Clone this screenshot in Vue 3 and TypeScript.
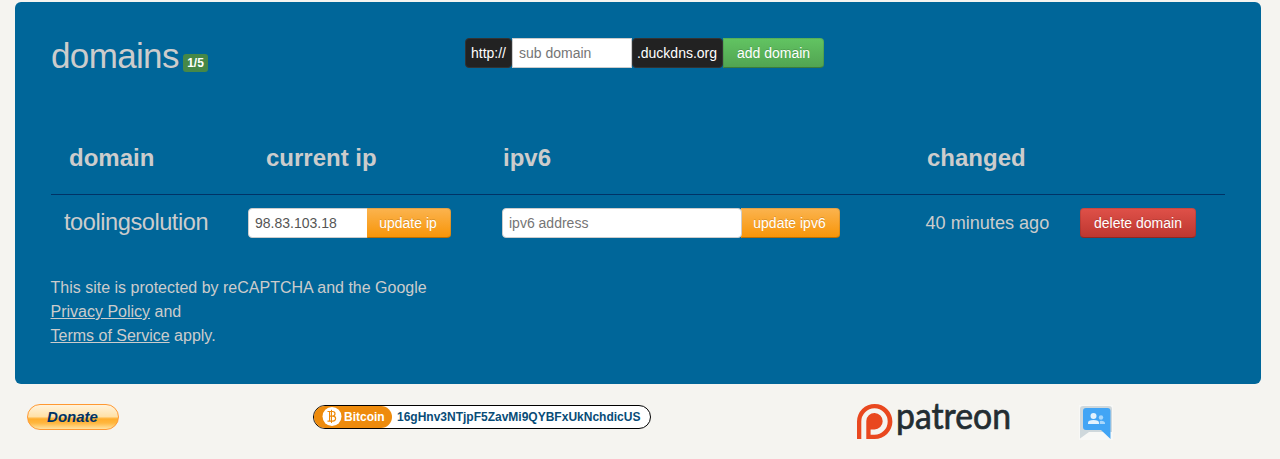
<script setup lang="ts">
import { ref } from 'vue'

interface Domain {
  name: string
  ip: string
  ipv6: string
  changed: string
}

const maxDomains = 5
const subDomain = ref('')
const domains = ref<Domain[]>([
  { name: 'toolingsolution', ip: '98.83.103.18', ipv6: '', changed: '40 minutes ago' },
])
const bitcoinAddress = '16gHnv3NTjpF5ZavMi9QYBFxUkNchdicUS'
</script>

<template>
  <div class="page">
    <main class="panel">
      <header class="top">
        <div class="title">
          <h2>domains</h2>
          <span class="badge">{{ domains.length }}/{{ maxDomains }}</span>
        </div>
        <form class="group" @submit.prevent>
          <span class="addon">http://</span>
          <input v-model="subDomain" class="field square" type="text" placeholder="sub domain" />
          <span class="addon suffix">.duckdns.org</span>
          <button class="btn green joined" type="submit">add domain</button>
        </form>
      </header>

      <section class="table">
        <div class="row head">
          <span class="h-domain">domain</span>
          <span class="h-ip">current ip</span>
          <span class="h-ipv6">ipv6</span>
          <span class="h-changed">changed</span>
        </div>
        <div v-for="d in domains" :key="d.name" class="row item">
          <span class="name">{{ d.name }}</span>
          <div class="group">
            <input v-model="d.ip" class="field left" type="text" />
            <button class="btn orange joined ip">update ip</button>
          </div>
          <div class="group">
            <input v-model="d.ipv6" class="field wide" type="text" placeholder="ipv6 address" />
            <button class="btn orange joined ipv6">update ipv6</button>
          </div>
          <span class="changed">{{ d.changed }}</span>
          <button class="btn red">delete domain</button>
        </div>
      </section>

      <p class="legal">
        This site is protected by reCAPTCHA and the Google<br />
        <a href="#">Privacy Policy</a> and<br />
        <a href="#">Terms of Service</a> apply.
      </p>
    </main>

    <footer class="footer">
      <button class="donate"><span>Donate</span></button>

      <div class="bitcoin">
        <span class="tag">
          <svg width="20" height="20" viewBox="0 0 20 20">
            <circle cx="10" cy="9.5" r="9.5" fill="#fff" />
            <g fill="none" stroke="#ee8b0c" stroke-width="1.2">
              <path d="M5.5 4.5H10.7Q13 4.5 13 6.7T10.7 9.1H7.6M10.7 9.1Q13.6 9.1 13.6 11.6T10.7 14.2H5.5M7.6 4.5V14.2" />
              <path d="M9.5 2.8V16" stroke-width="1" />
            </g>
          </svg>
          Bitcoin
        </span>
        <span class="address">{{ bitcoinAddress }}</span>
      </div>

      <svg class="patreon" width="156" height="38" viewBox="0 0 156 38">
        <path
          d="M0 35V17.5A17.7 17.5 0 1 1 17.5 35H9.3V17A8.2 8.2 0 1 1 17.5 25.4H13.6V30.7H17.5A13.2 13.2 0 1 0 4.3 17.5V35Z"
          fill="#e9481f"
        />
        <text x="39" y="25" textLength="115" lengthAdjust="spacingAndGlyphs">patreon</text>
      </svg>

      <svg class="groups" width="34" height="36" viewBox="0 0 34 36">
        <path d="M0 0H34V35H0Z" fill="#f8f8f6" />
        <path d="M4 1H30Q33 1 33 4V27H10L1 33.5V4Q1 1 4 1Z" fill="#cfd8dc" />
        <path d="M7 3H28.5Q31.5 3 31.5 6V34L22 25H7Q4 25 4 22V6Q4 3 7 3Z" fill="#42a5f5" />
        <g fill="#e3f2fd">
          <circle cx="14.5" cy="11" r="3" />
          <path d="M9 19V17.8Q9 15 14.5 15T20 17.8V19Z" />
        </g>
        <g fill="#a9d7fb">
          <circle cx="22" cy="12.5" r="2.2" />
          <path d="M20.8 19V16.2Q20.8 15.7 22 15.7Q26 16 26 18V19Z" />
        </g>
      </svg>
    </footer>
  </div>
</template>

<style>
body {
  background: #f5f4f0;
}
</style>

<style scoped>
.page {
  box-sizing: border-box;
  height: 459px;
  padding: 2px 19px 0 15px;
  overflow: hidden;
  font: 14px/20px "Liberation Sans", Arial, sans-serif;
  color: #ccc;
}
.panel {
  box-sizing: border-box;
  height: 382px;
  padding: 36px 36px 0;
  border-radius: 6px;
  background: #069;
}
.top {
  display: grid;
  grid-template-columns: 414px 1fr;
  height: 85px;
}
.title {
  display: flex;
  align-items: flex-start;
}
h2 {
  width: 132px;
  margin: -2px 0 0;
  font-size: 35px;
  font-weight: 400;
  line-height: 40px;
  letter-spacing: -0.65px;
}
.badge {
  box-sizing: border-box;
  width: 25px;
  height: 18px;
  margin-top: 16px;
  border-radius: 3px;
  background: #468847;
  color: #fff;
  font-size: 12px;
  font-weight: 700;
  line-height: 18px;
  text-align: center;
}
.group {
  display: flex;
  height: 30px;
}
.addon {
  box-sizing: border-box;
  width: 47px;
  border: 1px solid #333;
  border-radius: 4px;
  background: #222;
  color: #fff;
  line-height: 28px;
  text-align: center;
}
.addon.suffix {
  width: 91px;
  padding-right: 1px;
}
.field {
  box-sizing: border-box;
  width: 120px;
  height: 30px;
  margin: 0;
  padding: 0 6px;
  border: 1px solid #ccc;
  border-radius: 4px;
  background: #fff;
  color: #555;
  font: inherit;
  outline: none;
}
.field::placeholder {
  color: #757575;
}
.field.square {
  border-radius: 0;
}
.field.left {
  border-radius: 4px 0 0 4px;
}
.field.wide {
  z-index: 1;
  width: 240px;
}
.btn {
  box-sizing: border-box;
  height: 30px;
  padding: 0;
  border: 1px solid;
  border-color: rgba(0, 0, 0, 0.1) rgba(0, 0, 0, 0.1) rgba(0, 0, 0, 0.25);
  border-radius: 4px;
  color: #fff;
  font: inherit;
  line-height: 28px;
  text-shadow: 0 -1px 0 rgba(0, 0, 0, 0.15);
}
.btn.joined {
  border-radius: 0 4px 4px 0;
}
.green {
  width: 101px;
  background: linear-gradient(#62c462, #51a351) border-box;
}
.orange {
  margin-left: -1px;
  padding-right: 2px;
  border-left-color: transparent;
  background: linear-gradient(#fbb450, #f89406) border-box;
}
.orange.ip {
  width: 84px;
}
.orange.ipv6 {
  width: 99px;
}
.red {
  width: 116px;
  background: linear-gradient(#df5149, #bd362f) border-box;
}
.row {
  display: grid;
  grid-template-columns: 197px 254px 424px 154px 1fr;
}
.head {
  box-sizing: border-box;
  height: 72px;
  padding-top: 20px;
  border-bottom: 1px solid #036;
  font-size: 24px;
  font-weight: 700;
  line-height: 30px;
}
.h-domain {
  padding-left: 18px;
}
.h-ip {
  padding-left: 18px;
}
.h-ipv6 {
  padding-left: 1px;
}
.h-changed {
  padding-left: 1px;
}
.item {
  padding-top: 13px;
  line-height: 30px;
}
.name {
  margin-top: -1px;
  padding-left: 13px;
  font-size: 23.6px;
  letter-spacing: -0.45px;
}
.changed {
  margin-left: -0.5px;
  font-size: 18.1px;
}
.legal {
  margin: 38px 0 0 -0.5px;
  font-size: 16px;
  line-height: 24px;
}
.legal a {
  color: inherit;
  text-decoration: underline;
}
.footer {
  display: flex;
  align-items: flex-start;
  padding: 20px 0 0 12px;
}
.donate {
  box-sizing: border-box;
  width: 92px;
  height: 26px;
  padding: 0 1px 0 0;
  border: 1px solid #ff9933;
  border-radius: 13px;
  background: linear-gradient(#fff3dc 0, #ffe1a8 48%, #ffad2c 58%, #ffb73f 75%, #ffe2a0 100%);
  color: #036;
  font: italic 700 15px/24px "Liberation Sans", Arial, sans-serif;
}
.bitcoin {
  box-sizing: border-box;
  display: flex;
  width: 338px;
  height: 24px;
  margin: 1px 0 0 194px;
  overflow: hidden;
  border: 1px solid #000;
  border-radius: 12px;
  background: #fff;
  font-size: 12px;
  font-weight: 700;
  line-height: 22px;
}
.tag {
  display: flex;
  align-items: center;
  gap: 2px;
  width: 70px;
  padding-left: 8px;
  border-radius: 0 11px 11px 0;
  background: #ee8b0c;
  color: #fff;
}
.address {
  padding-left: 5px;
  color: #084c77;
}
.patreon {
  margin-left: 206px;
  overflow: visible;
}
.patreon text {
  fill: #232d32;
  font: 400 36px Lato, sans-serif;
  stroke: #232d32;
  stroke-width: 0.7px;
}
.groups {
  margin: 1px 0 0 66px;
}
</style>
